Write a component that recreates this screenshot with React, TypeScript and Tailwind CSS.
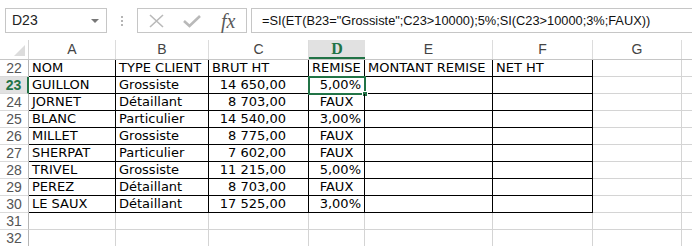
import { ReactNode } from 'react';

const COLS = [
  { id: 'A', w: 'w-[87px]' },
  { id: 'B', w: 'w-[93px]' },
  { id: 'C', w: 'w-[100px]' },
  { id: 'D', w: 'w-[56px]' },
  { id: 'E', w: 'w-[128px]' },
  { id: 'F', w: 'w-[100px]' },
  { id: 'G', w: 'w-[89px]' },
];

type Row = { n: number; nom?: string; type?: string; brut?: string; remise?: string };

const ROWS: Row[] = [
  { n: 23, nom: 'GUILLON', type: 'Grossiste', brut: '14 650,00', remise: '5,00%' },
  { n: 24, nom: 'JORNET', type: 'Détaillant', brut: '8 703,00', remise: 'FAUX' },
  { n: 25, nom: 'BLANC', type: 'Particulier', brut: '14 540,00', remise: '3,00%' },
  { n: 26, nom: 'MILLET', type: 'Grossiste', brut: '8 775,00', remise: 'FAUX' },
  { n: 27, nom: 'SHERPAT', type: 'Particulier', brut: '7 602,00', remise: 'FAUX' },
  { n: 28, nom: 'TRIVEL', type: 'Grossiste', brut: '11 215,00', remise: '5,00%' },
  { n: 29, nom: 'PEREZ', type: 'Détaillant', brut: '8 703,00', remise: 'FAUX' },
  { n: 30, nom: 'LE SAUX', type: 'Détaillant', brut: '17 525,00', remise: '3,00%' },
];

function RowHead({ n, active }: { n: number; active?: boolean }) {
  return (
    <div
      className={`w-[29px] shrink-0 h-full flex items-center justify-center border-b border-[#dadada] text-[14px] font-['Liberation_Sans',sans-serif] ${
        active
          ? 'bg-[#e1e1e1] border-r-2 border-r-[#217346] text-[#217346] font-bold'
          : 'border-r border-r-[#b5b5b5] text-[#555]'
      }`}
    >
      {n}
    </div>
  );
}

function Cell({
  w,
  dark,
  align = 'left',
  children,
}: {
  w: string;
  dark?: boolean;
  align?: 'left' | 'right' | 'center' | 'num';
  children?: ReactNode;
}) {
  const al =
    align === 'right'
      ? 'justify-end pr-[3px]'
      : align === 'num'
        ? 'justify-end pr-[22px]'
        : align === 'center'
          ? 'justify-center'
          : 'justify-start pl-[3px]';
  return (
    <div
      className={`${w} shrink-0 h-full flex items-center whitespace-nowrap overflow-visible border-r border-b ${al} ${
        dark ? 'border-black' : 'border-[#d4d4d4]'
      }`}
    >
      {children}
    </div>
  );
}

export default function App() {
  return (
    <div className="w-[692px] h-[246px] overflow-hidden bg-white font-['DejaVu_Sans',sans-serif] text-[13px] text-black">
      {/* formula bar */}
      <div className="h-[40px] flex items-start pt-[8px] pl-[5px]">
        <div className="w-[102px] h-[25px] border border-[#c6c6c6] flex items-center justify-between pl-[6px] pr-[7px] font-['Liberation_Sans',sans-serif] text-[14px] text-[#222]">
          <span>D23</span>
          <span className="w-0 h-0 border-l-[4px] border-r-[4px] border-t-[4px] border-l-transparent border-r-transparent border-t-[#777]" />
        </div>
        <div className="w-[30px] h-[25px] flex flex-col items-center justify-center gap-[2px]">
          <span className="w-[2px] h-[2px] bg-[#b5b5b5]" />
          <span className="w-[2px] h-[2px] bg-[#b5b5b5]" />
          <span className="w-[2px] h-[2px] bg-[#b5b5b5]" />
        </div>
        <div className="w-[110px] h-[25px] border border-[#c6c6c6] flex items-center pl-[11px]">
          <svg width="15" height="14" viewBox="0 0 15 14" className="shrink-0">
            <path d="M1 1L14 13M14 1L1 13" stroke="#b9b9b9" strokeWidth="1.6" />
          </svg>
          <svg width="18" height="14" viewBox="0 0 18 14" className="ml-[19px] shrink-0">
            <path d="M1 7L6.5 12L17 2" stroke="#b9b9b9" strokeWidth="2.6" fill="none" />
          </svg>
          <span className="ml-[20px] font-['Liberation_Serif',serif] italic text-[20px] leading-none text-[#5a5a5a]">
            fx
          </span>
        </div>
        <div className="ml-[4px] flex-1 h-[25px] border border-r-0 border-[#c6c6c6] flex items-center pl-[10px] font-['Liberation_Sans',sans-serif] text-[12.8px] text-[#111] whitespace-nowrap">
          =SI(ET(B23="Grossiste";C23&gt;10000);5%;SI(C23&gt;10000;3%;FAUX))
        </div>
      </div>

      {/* column headers */}
      <div className="h-[20px] flex border-b border-[#c6c6c6] font-['Liberation_Sans',sans-serif] text-[14px] text-[#444]">
        <div className="w-[29px] shrink-0 flex items-end justify-end pr-[3px] pb-[3px] border-r border-[#d4d4d4]">
          <svg width="11" height="11" viewBox="0 0 11 11">
            <path d="M11 0L11 11L0 11Z" fill="#dcdcdc" />
          </svg>
        </div>
        {COLS.map((c) =>
          c.id === 'D' ? (
            <div
              key={c.id}
              className={`${c.w} shrink-0 flex items-center justify-center bg-[#e1e1e1] border-b-2 border-[#217346] text-[#217346] font-bold font-['Liberation_Serif',serif] text-[16px]`}
            >
              {c.id}
            </div>
          ) : (
            <div
              key={c.id}
              className={`${c.w} shrink-0 flex items-center justify-center border-r border-[#dcdcdc]`}
            >
              {c.id}
            </div>
          )
        )}
        <div className="flex-1" />
      </div>

      {/* row 22 */}
      <div className="h-[17px] flex">
        <RowHead n={22} />
        <Cell w="w-[87px]" dark>NOM</Cell>
        <Cell w="w-[93px]" dark>TYPE CLIENT</Cell>
        <Cell w="w-[100px]" dark>BRUT HT</Cell>
        <Cell w="w-[56px]" dark>REMISE</Cell>
        <Cell w="w-[128px]" dark>MONTANT REMISE</Cell>
        <Cell w="w-[100px]" dark>NET HT</Cell>
        <Cell w="w-[89px]" />
        <div className="flex-1 border-b border-[#d4d4d4]" />
      </div>

      {ROWS.map((r) => (
        <div key={r.n} className="h-[17px] flex">
          <RowHead n={r.n} active={r.n === 23} />
          <Cell w="w-[87px]" dark>{r.nom}</Cell>
          <Cell w="w-[93px]" dark>{r.type}</Cell>
          <Cell w="w-[100px]" dark align="num">{r.brut}</Cell>
          <div className="relative">
            <Cell w="w-[56px]" dark align={r.remise === 'FAUX' ? 'center' : 'right'}>
              {r.remise}
            </Cell>
            {r.n === 23 && (
              <>
                <span className="absolute -left-[1px] -top-[1px] -right-[1px] -bottom-[1px] border-2 border-[#217346]" />
                <span className="absolute -right-[3px] -bottom-[3px] w-[6px] h-[6px] bg-[#217346] border border-white" />
              </>
            )}
          </div>
          <Cell w="w-[128px]" dark />
          <Cell w="w-[100px]" dark />
          <Cell w="w-[89px]" />
          <div className="flex-1 border-b border-[#d4d4d4]" />
        </div>
      ))}

      {[31, 32].map((n) => (
        <div key={n} className="h-[17px] flex">
          <RowHead n={n} />
          {COLS.map((c) => (
            <Cell key={c.id} w={c.w} />
          ))}
          <div className="flex-1 border-b border-[#d4d4d4]" />
        </div>
      ))}
    </div>
  );
}
